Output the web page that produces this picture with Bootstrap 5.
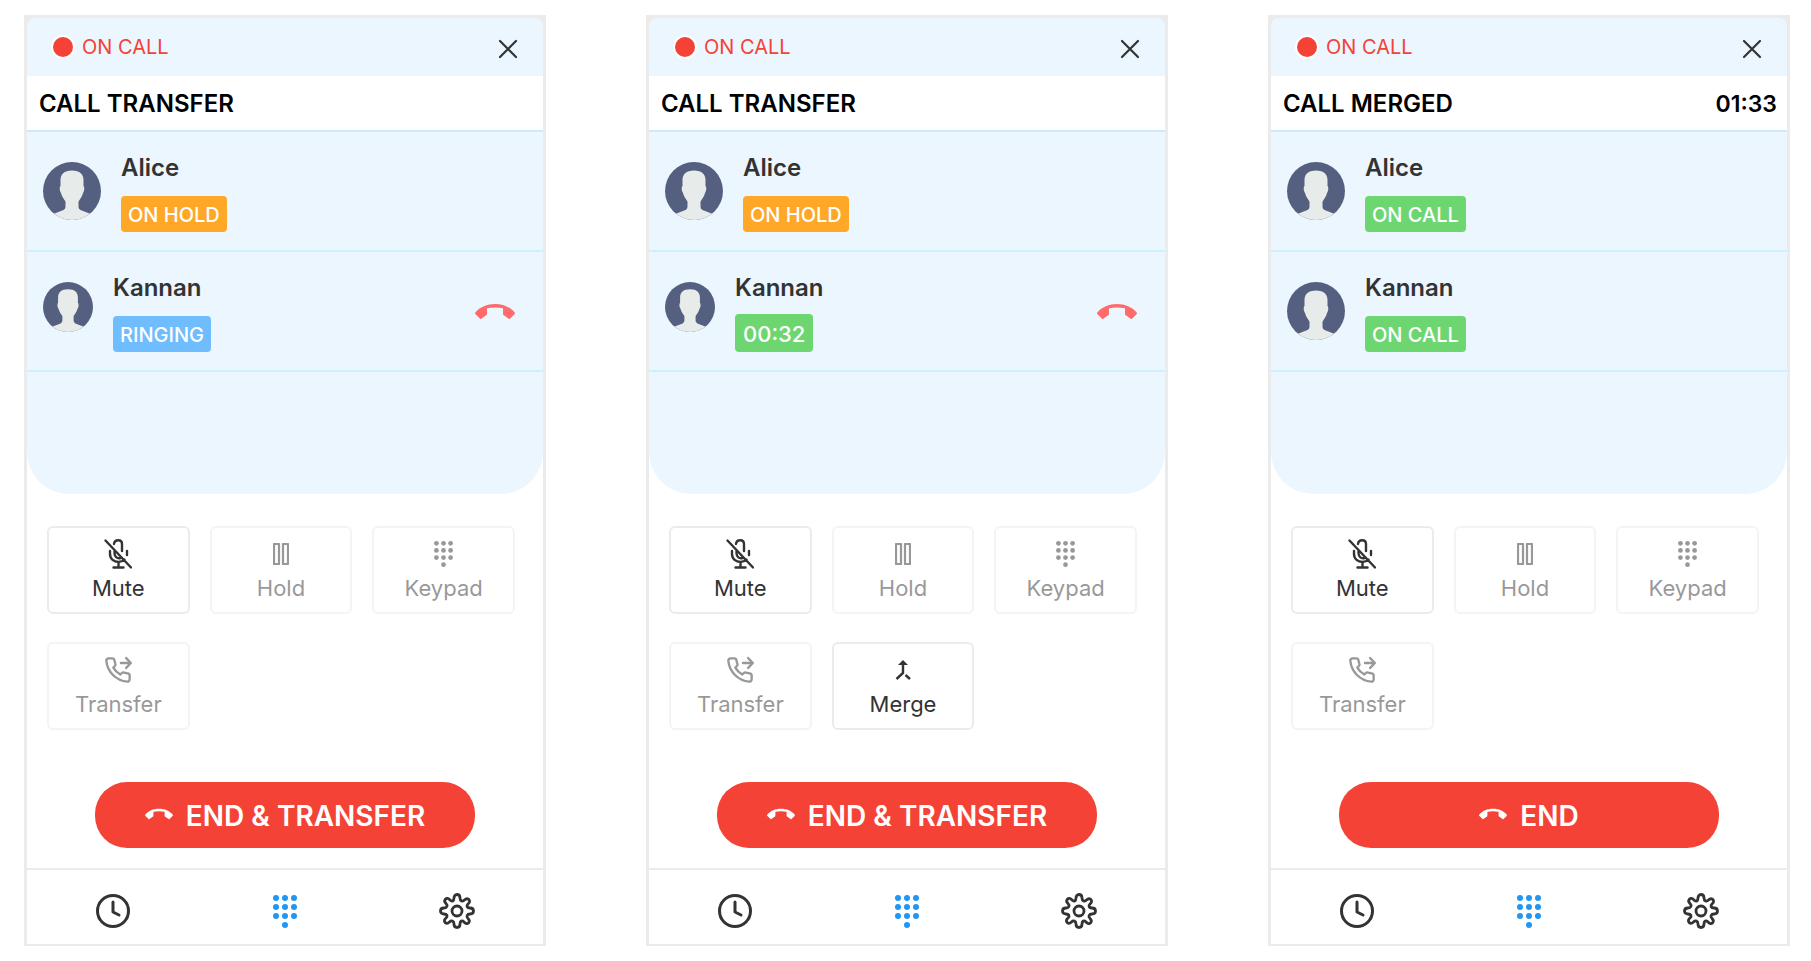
<!DOCTYPE html>
<html lang="en">
<head>
<meta charset="utf-8">
<meta name="viewport" content="width=device-width, initial-scale=1">
<title>Call transfer</title>
<link href="https://cdn.jsdelivr.net/npm/bootstrap@5.3.0/dist/css/bootstrap.min.css" rel="stylesheet">
<style>
  body { font-family: Inter, "Liberation Sans", sans-serif; color: #333; background: #fff; }
  .screens { display: grid; grid-template-columns: repeat(auto-fit, minmax(440px, 1fr)); gap: 40px 100px; padding: 15px 21px 15px 24px; }
  .phone { border: 3px solid #ebebeb; border-bottom-width: 2px; background: #ebebeb; }
  .phone-top { background: #ebf6ff; border-radius: 8px 8px 0 0; height: 58px; padding: 0 25px 0 26px; }
  .live { color: #f44336; font-size: 20px; line-height: 24px; gap: 9px; }
  .live-dot { width: 20px; height: 20px; border-radius: 50%; background: #f44336; box-shadow: 0 0 0 2px #fff; }
  .bare { background: none; border: 0; padding: 0; line-height: 0; color: #333; }
  .close-call { padding-top: 4px; }
  .drop-call { color: #ff6a6a; padding-bottom: 4px; }
  .phone-title { background: #fff; color: #000; border-bottom: 2px solid #cce9ff; height: 56px; padding: 2px 10px 0 12px; font-weight: 600; font-size: 24px; line-height: 30px; }
  .phone-title h2 { font: inherit; margin: 0; }
  .timer { font-size: 23px; }
  .phone-main { background: #fff; }
  .callers { background: #ebf6ff; border-radius: 0 0 42px 42px; min-height: 362px; }
  .caller { height: 120px; border-bottom: 2px solid #ccf0ff; padding: 22px 28px 18px 16px; }
  .avatar { width: 58px; height: 58px; margin-top: 8px; border-radius: 50%; }
  .avatar-sm { width: 50px; height: 50px; }
  .caller-info { margin-left: 20px; }
  .caller-name { font-weight: 600; font-size: 24px; line-height: 28px; }
  .state { display: inline-block; color: #fff; border-radius: 4px; font-weight: 500; font-size: 20px; line-height: 24px; padding: 7px 7px 5px; }
  .state-time { font-size: 22px; line-height: 26px; padding: 7px 8px 5px; }
  .state-hold { background: #ffa726; }
  .state-ring { background: #6fbdff; }
  .state-on { background: #6dd670; }
  .pad { display: grid; grid-template-columns: repeat(3, 1fr); gap: 28px 20px; padding: 32px 28px 52px 20px; }
  .key { height: 88px; border: 2px solid #ebebeb; border-radius: 6px; background: #fff; color: #333; font-size: 22px; line-height: 28px; padding: 9px 0 10px; }
  .key:disabled { opacity: .5; color: #333; }
  .key-icon { height: 34px; }
  .hangup { display: flex; width: 380px; max-width: 90%; height: 66px; margin: 0 auto 20px; padding: 2px 0 0; border: 0; border-radius: 32px; background: #f44336; color: #fff; font-weight: 600; font-size: 28px; line-height: 34px; gap: 13px; }
  .hangup svg { margin-bottom: 4px; }
  .tabs { border-top: 2px solid #ebebeb; height: 76px; padding-top: 8px; }
  .tab-link { color: #333; line-height: 0; }
  .tab-on { color: #2196f3; }
</style>
</head>
<body>
<svg width="0" height="0" class="position-absolute" aria-hidden="true">
  <symbol id="i-x" viewBox="0 0 20 20"><path d="M2 2l16 16M18 2L2 18" fill="none" stroke="currentColor" stroke-width="2.200" stroke-linecap="round"/></symbol>
  <symbol id="i-user" viewBox="0 0 58 58"><path fill="#556080" d="M0 0h58v58H0z"/><path fill="#e7eceb" d="M29 8.500c-8 0-11.500 4-11.500 9.500v6c-1.200 1-1 5 .5 7 1 4 3 6 4.500 8.500v5c0 1.500-.5 2.500-2 3.500L9 52.500l-2 8h44l-2-8L37.500 48c-1.500-1-2-2-2-3.500v-5c1.500-2.500 3.500-4.500 4.500-8.500 1.500-2 1.700-6 .5-7v-6c0-5.500-3.500-9.500-11.500-9.500z"/></symbol>
  <symbol id="i-end" viewBox="0 0 40 15"><path fill="currentColor" d="M20 0C12 0 5 3 .3 8.500q-.5.800 0 1.500L5 14.700q.7.500 1.300 0L11.500 11q.5-.5.500-1.200V4.200q8-1.500 16 0v5.600q0 .7.500 1.200l5.200 3.700q.6.500 1.300 0L39.700 10q.5-.7 0-1.500C35 3 28 0 20 0z"/></symbol>
  <symbol id="i-mute" viewBox="0 0 28 30"><g fill="none" stroke="currentColor" stroke-width="2.400" stroke-linecap="round"><path d="M1.500 1.500l25.500 27M10 5c.5-5 8-5 8 0v7M6 12v3c0 5 4 8 8.500 8 2.500 0 4.500-1 6-2.500M10.500 12v2c0 4 3 6 6 5M23 12v4M14.500 23v5M9.500 28.500h10"/></g></symbol>
  <symbol id="i-pause" viewBox="0 0 16 22"><path d="M1 1h5v20H1zM10 1h5v20h-5z" fill="none" stroke="currentColor" stroke-width="2.200" stroke-linejoin="round"/></symbol>
  <symbol id="i-dots" viewBox="0 0 24 33"><g fill="currentColor"><circle cx="3" cy="3" r="3"/><circle cx="12" cy="3" r="3"/><circle cx="21" cy="3" r="3"/><circle cx="3" cy="12" r="3"/><circle cx="12" cy="12" r="3"/><circle cx="21" cy="12" r="3"/><circle cx="3" cy="21" r="3"/><circle cx="12" cy="21" r="3"/><circle cx="21" cy="21" r="3"/><circle cx="12" cy="30" r="3"/></g></symbol>
  <symbol id="i-forward" viewBox="0 0 24 24"><path d="M14.500 6H22.500M19 1.800L23 6l-4 4.200M22 17v3a2 2 0 0 1-2.200 2A19.800 19.800 0 0 1 2 4.200 2 2 0 0 1 4 2h3a2 2 0 0 1 2 1.700c.1 1 .4 1.900.7 2.800a2 2 0 0 1-.4 2.100L8 9.900a16 16 0 0 0 6 6l1.300-1.300a2 2 0 0 1 2.100-.4c.9.300 1.800.6 2.800.7A2 2 0 0 1 22 17z" fill="none" stroke="currentColor" stroke-width="2" stroke-linecap="round" stroke-linejoin="round"/></symbol>
  <symbol id="i-merge" viewBox="0 0 16 20"><path d="M8 4v9l-6.500 6M10.500 15l4.500 4" fill="none" stroke="currentColor" stroke-width="2.400"/><path d="M8 0l5 5H3z" fill="currentColor"/></symbol>
  <symbol id="i-clock" viewBox="0 0 34 34"><path d="M17 8v10l6 3" fill="none" stroke="currentColor" stroke-width="3" stroke-linecap="round" stroke-linejoin="round"/><circle cx="17" cy="17" r="15.500" fill="none" stroke="currentColor" stroke-width="3"/></symbol>
  <symbol id="i-gear" viewBox="0 0 36 36"><g fill="none" stroke="currentColor" stroke-width="2.800" stroke-linejoin="round"><circle cx="18" cy="18" r="5"/><path d="M18 1.500c2 0 3 1.500 3 3.500 0 3 2.500 4 4.500 2 1.500-1.500 3-1.500 4.200-.7 1.500 1.500 1 3.200-.7 4.700-2 2-1 4 2 4 2 0 3.500 1 3.500 3s-1.500 3-3.500 3c-3 0-4 2.500-2 4.500 1.500 1.500 1.700 3 .7 4.200-1.500 1.500-3.200 1-4.700-.7-2-2-4-1-4 2 0 2-1 3.500-3 3.500s-3-1.500-3-3.500c0-3-2.500-4-4.500-2-1.500 1.500-3 1.700-4.200.7-1.500-1.500-1-3.200.7-4.700 2-2 1-4-2-4-2 0-3.500-1-3.500-3s1.500-3 3.500-3c3 0 4-2.500 2-4.500-1.500-1.500-1.700-3-.7-4.200 1.500-1.500 3.200-1 4.700.7 2 2 4 1 4-2 0-2 1-3.500 3-3.500z"/></g></symbol>
</svg>
<main class="screens" id="screens"></main>
<script src="https://cdn.jsdelivr.net/npm/bootstrap@5.3.0/dist/js/bootstrap.bundle.min.js"></script>
<script>
  const icon = (id, w, h) => `<svg width="${w}" height="${h}" aria-hidden="true"><use href="#i-${id}"/></svg>`;
  const caller = c => `
    <li class="caller d-flex align-items-start">
      <svg class="avatar flex-shrink-0 ${c.small ? 'avatar-sm' : ''}" aria-hidden="true"><use href="#i-user"/></svg>
      <div class="caller-info flex-grow-1 h-100 d-flex flex-column justify-content-between align-items-start">
        <span class="caller-name">${c.name}</span>
        <span class="state ${c.cls}">${c.state}</span>
      </div>
      ${c.small ? `<button class="bare drop-call align-self-center" aria-label="Hang up ${c.name}">${icon('end', 40, 15)}</button>` : ''}
    </li>`;
  const key = (label, ic, off) => `<button class="key d-flex flex-column align-items-center justify-content-between" ${off ? 'disabled' : ''}><span class="key-icon d-flex align-items-center justify-content-center">${ic}</span>${label}</button>`;
  const phone = p => `
    <section class="phone">
      <header class="phone-top d-flex align-items-center justify-content-between">
        <span class="live d-flex align-items-center"><span class="live-dot"></span>ON CALL</span>
        <button class="bare close-call" aria-label="Close">${icon('x', 20, 20)}</button>
      </header>
      <div class="phone-title d-flex align-items-center justify-content-between"><h2>${p.title}</h2>${p.timer ? `<span class="timer">${p.timer}</span>` : ''}</div>
      <div class="phone-main">
        <ul class="callers list-unstyled mb-0">${p.callers.map(caller).join('')}</ul>
        <div class="pad">
          ${key('Mute', icon('mute', 28, 30))}
          ${key('Hold', icon('pause', 16, 22), true)}
          ${key('Keypad', icon('dots', 19, 26), true)}
          ${key('Transfer', icon('forward', 28, 28), true)}
          ${p.merge ? key('Merge', icon('merge', 16, 20)) : ''}
        </div>
        <button class="hangup align-items-center justify-content-center">${icon('end', 28, 12)}${p.end}</button>
        <nav class="tabs d-flex align-items-center">
          <a class="tab-link col text-center" href="#" aria-label="History">${icon('clock', 34, 34)}</a>
          <a class="tab-link tab-on col text-center" href="#" aria-label="Keypad">${icon('dots', 24, 33)}</a>
          <a class="tab-link col text-center" href="#" aria-label="Settings">${icon('gear', 36, 36)}</a>
        </nav>
      </div>
    </section>`;
  const hold = { name: 'Alice', state: 'ON HOLD', cls: 'state-hold' };
  const on = name => ({ name, state: 'ON CALL', cls: 'state-on' });
  document.getElementById('screens').innerHTML = [
    { title: 'CALL TRANSFER', end: 'END &amp; TRANSFER', callers: [hold, { name: 'Kannan', state: 'RINGING', cls: 'state-ring', small: true }] },
    { title: 'CALL TRANSFER', end: 'END &amp; TRANSFER', merge: true, callers: [hold, { name: 'Kannan', state: '00:32', cls: 'state-on state-time', small: true }] },
    { title: 'CALL MERGED', timer: '01:33', end: 'END', callers: [on('Alice'), on('Kannan')] }
  ].map(phone).join('');
</script>
</body>
</html>
